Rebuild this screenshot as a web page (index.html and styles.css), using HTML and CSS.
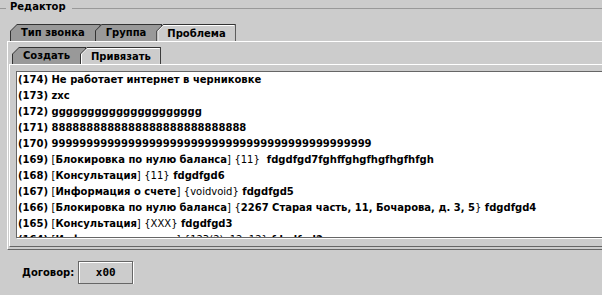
FILE: index.html
```html
<!DOCTYPE html>
<html lang="ru">
<head>
<meta charset="utf-8">
<title>Редактор</title>
<link rel="stylesheet" href="styles.css">
</head>
<body>
<div class="editor">
  <div class="legend"><span class="ln short"></span><span class="title">Редактор</span><span class="ln grow"></span></div>
  <div class="tabrow top">
    <div class="tab"><div class="face">Тип звонка</div></div>
    <div class="tab"><div class="face">Группа</div></div>
    <div class="tab sel"><div class="hl"><div class="face">Проблема</div></div></div>
  </div>
  <div class="panel outer">
    <div class="tabrow">
      <div class="tab"><div class="face">Создать</div></div>
      <div class="tab sel"><div class="hl"><div class="face">Привязать</div></div></div>
    </div>
    <div class="panel inner">
      <div class="scroll">
        <div class="row">(174) Не работает интернет в черниковке</div>
        <div class="row">(173) zxc</div>
        <div class="row">(172) ggggggggggggggggggggg</div>
        <div class="row">(171) 8888888888888888888888888888</div>
        <div class="row">(170) 9999999999999999999999999999999999999999999999</div>
        <div class="row">(169) <span class="br">[</span>Блокировка по нулю баланса<span class="br">]</span> <span class="rg">{11}</span>&nbsp; fdgdfgd7fghffghgfhgfhgfhfgh</div>
        <div class="row">(168) <span class="br">[</span>Консультация<span class="br">]</span> <span class="rg">{11}</span> fdgdfgd6</div>
        <div class="row">(167) <span class="br">[</span>Информация о счете<span class="br">]</span> <span class="rg">{voidvoid}</span> fdgdfgd5</div>
        <div class="row">(166) <span class="br">[</span>Блокировка по нулю баланса<span class="br">]</span> <span class="br">{</span>2267 Старая часть, 11, Бочарова, д. 3, 5<span class="br">}</span> fdgdfgd4</div>
        <div class="row">(165) <span class="br">[</span>Консультация<span class="br">]</span> <span class="rg">{XXX}</span> fdgdfgd3</div>
        <div class="row">(164) <span class="br">[</span>Информация о счете<span class="br">]</span> <span class="rg">{123(2), 12, 12}</span> fdgdfgd2</div>
      </div>
    </div>
  </div>
  <div class="footer">
    <span class="label">Договор:</span>
    <div class="field">x00</div>
  </div>
</div>
</body>
</html>
```
FILE: styles.css
```css
html, body {
  margin: 0;
  padding: 0;
  overflow: hidden;
  background: #cccccc;
}
body {
  font-family: "DejaVu Sans", sans-serif;
  font-weight: bold;
  font-size: 10px;
  color: #000;
}
.editor {
  width: 640px;
}
.legend {
  display: flex;
  align-items: flex-start;
  height: 14px;
  margin-bottom: 10px;
}
.legend .ln {
  height: 1px;
  margin-top: 8px;
  background: #999999;
}
.legend .short { width: 6px; }
.legend .grow { flex: 1; }
.legend .title {
  line-height: 14px;
  padding: 0 6px 0 4px;
}
.tabrow {
  display: flex;
  height: 17px;
  padding-left: 3px;
}
.tabrow.top { padding-left: 10px; }
.tab {
  height: 17px;
  background: #333333;
  clip-path: polygon(0 7px, 7px 0, 100% 0, 100% 100%, 0 100%);
  padding: 1px 1px 0 1px;
  box-sizing: border-box;
}
.tab + .tab { margin-left: -6px; }
.tab .face {
  height: 100%;
  background: #999999;
  clip-path: polygon(0 6px, 6px 0, 100% 0, 100% 100%, 0 100%);
  line-height: 16px;
  padding: 0 15px 0 10px;
  white-space: nowrap;
}
.tab.sel { background: #333333; padding-bottom: 0; }
.tab.sel .hl {
  height: 100%;
  background: #ffffff;
  clip-path: polygon(0 6px, 6px 0, 100% 0, 100% 100%, 0 100%);
  padding: 1px 0 0 1px;
  box-sizing: border-box;
}
.tab.sel .face {
  background: #cccccc;
  clip-path: polygon(0 5px, 5px 0, 100% 0, 100% 100%, 0 100%);
  line-height: 15px;
  padding: 0 9px 0 9px;
}
.panel.outer {
  margin-left: 7px;
  border-top: 1px solid #ffffff;
  border-left: 1px solid #ffffff;
  border-bottom: 1px solid #666666;
  padding: 5px 0 2px 1px;
}
.panel.inner {
  border-top: 1px solid #ffffff;
  border-left: 1px solid #ffffff;
  border-bottom: 1px solid #666666;
  padding: 6px 0 8px 6px;
}
.scroll {
  height: 167px;
  box-sizing: border-box;
  border: 1px solid #666666;
  box-shadow: 1px 1px 0 #ffffff;
  background: #ffffff;
  overflow: hidden;
  padding-left: 1px;
}
.row {
  height: 16px;
  line-height: 16px;
  white-space: nowrap;
}
.row .br, .row .rg {
  font-weight: normal;
}
.footer {
  display: flex;
  align-items: center;
  margin-top: 11px;
  padding-left: 22px;
  gap: 4px;
}
.field {
  width: 55px;
  height: 23px;
  box-sizing: border-box;
  border: 1px solid #666666;
  box-shadow: inset 1px 1px 0 #ffffff, 1px 1px 0 #ffffff;
  display: flex;
  align-items: center;
  justify-content: center;
  font-family: "DejaVu Sans Mono", monospace;
  font-size: 11px;
}
```
